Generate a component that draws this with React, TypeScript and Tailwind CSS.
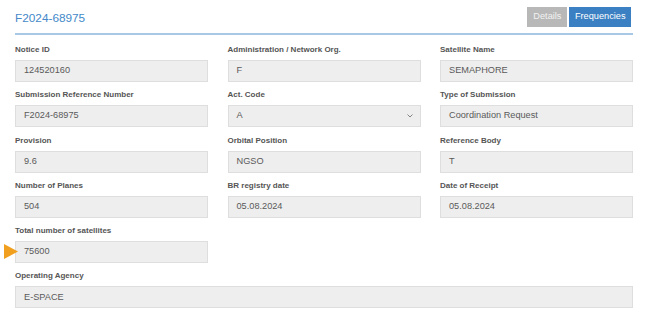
import React from "react";

type Field = { label: string; value: string; select?: boolean; marker?: boolean; full?: boolean };

const fields: Field[] = [
  { label: "Notice ID", value: "124520160" },
  { label: "Administration / Network Org.", value: "F" },
  { label: "Satellite Name", value: "SEMAPHORE" },
  { label: "Submission Reference Number", value: "F2024-68975" },
  { label: "Act. Code", value: "A", select: true },
  { label: "Type of Submission", value: "Coordination Request" },
  { label: "Provision", value: "9.6" },
  { label: "Orbital Position", value: "NGSO" },
  { label: "Reference Body", value: "T" },
  { label: "Number of Planes", value: "504" },
  { label: "BR registry date", value: "05.08.2024" },
  { label: "Date of Receipt", value: "05.08.2024" },
  { label: "Total number of satellites", value: "75600", marker: true },
];

function FieldBox({ f }: { f: Field }) {
  return (
    <div className={f.full ? "col-span-3" : ""}>
      <div className="h-[10px] leading-[10px] text-[8px] font-bold text-[#555] mb-[5px] whitespace-nowrap">
        {f.label}
      </div>
      <div className="relative h-[22px] bg-[#eeeeee] border border-[#dedede] flex items-center pl-[8px] pr-[6px] text-[9.2px] text-[#5a5a5a]">
        {f.marker && (
          <svg
            className="absolute left-[-12px] top-[2px]"
            width="14"
            height="15"
            viewBox="0 0 14 15"
          >
            <polygon points="0,0 14,7.5 0,15" fill="#f0a01e" />
          </svg>
        )}
        <span className="flex-1">{f.value}</span>
        {f.select && (
          <svg width="6" height="4" viewBox="0 0 6 4" className="mr-[1px]">
            <polyline points="0.5,0.5 3,3 5.5,0.5" fill="none" stroke="#777" strokeWidth="0.9" />
          </svg>
        )}
      </div>
    </div>
  );
}

export default function App() {
  return (
    <div
      className="w-[648px] h-[321px] bg-white px-[15px] overflow-hidden"
      style={{ fontFamily: '"Liberation Sans", Arial, sans-serif' }}
    >
      <div className="flex items-center justify-between pt-[7px] h-[33px]">
        <div className="text-[11.8px] text-[#4489c9] mb-[2px]">F2024-68975</div>
        <div className="flex gap-[2px] self-start">
          <div className="h-[20px] px-[6px] flex items-center bg-[#b8b8b8] text-[#f2f2f2] text-[9.2px]">
            Details
          </div>
          <div className="h-[20px] px-[5.5px] flex items-center bg-[#3a80c2] text-white text-[9.2px] mr-[2px]">
            Frequencies
          </div>
        </div>
      </div>
      <div className="h-[2px] bg-[#a9c8e6]" />
      <div className="grid grid-cols-3 gap-x-[19.5px] gap-y-[8.3px] pt-[10px]">
        {fields.map((f) => (
          <FieldBox key={f.label} f={f} />
        ))}
        <div />
        <div />
        <FieldBox f={{ label: "Operating Agency", value: "E-SPACE", full: true }} />
      </div>
    </div>
  );
}
